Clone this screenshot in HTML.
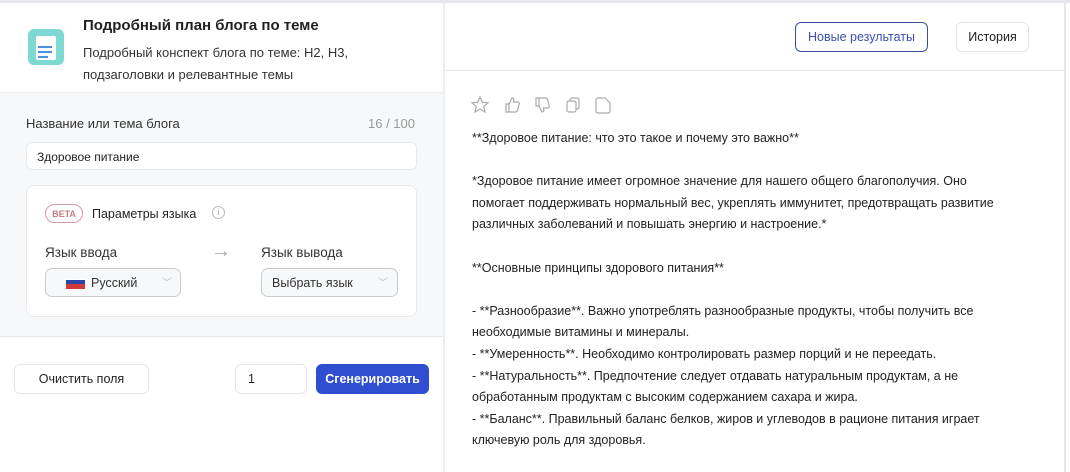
<!DOCTYPE html>
<html><head><meta charset="utf-8"><style>
*{box-sizing:border-box;margin:0;padding:0}
body{width:1070px;height:472px;overflow:hidden;background:#fff;font-family:"Liberation Sans","DejaVu Sans",sans-serif;color:#222;position:relative}
.a{position:absolute}
.btn{position:absolute;border:1px solid #e3e5ea;border-radius:6px;background:#fff;font-size:13px;display:flex;align-items:center;justify-content:center}
.txt{position:absolute;left:472px;top:128px;width:545px;font-size:12.5px;line-height:21.6px;color:#222}
</style></head><body>
<div class="a" style="left:0;top:0;width:1070px;height:3px;background:#e6e7ea"></div>
<!-- left -->
<div class="a" style="left:0;top:92px;width:443px;height:245px;background:#f7f8fa;border-top:1px solid #eceef1;border-bottom:1px solid #e6e8ec"></div>
<div class="a" style="left:443px;top:3px;width:2px;height:469px;background:#eceef1"></div>
<div class="a" style="left:28px;top:29px;width:36px;height:36px;border-radius:6px;background:#7dd9d2"></div>
<div class="a" style="left:36px;top:36px;width:20px;height:24px;background:#fff;border-radius:2px"></div>
<div class="a" style="left:38px;top:46px;width:14px;height:2px;background:#4a90e2"></div>
<div class="a" style="left:38px;top:51px;width:14px;height:2px;background:#4a90e2"></div>
<div class="a" style="left:38px;top:56px;width:10px;height:2px;background:#4a90e2"></div>
<div class="a" style="left:83px;top:17px;font-size:15px;font-weight:bold;color:#222">Подробный план блога по теме</div>
<div class="a" style="left:83px;top:42px;font-size:13px;line-height:22px;color:#333">Подробный конспект блога по теме: H2, H3,<br>подзаголовки и релевантные темы</div>
<div class="a" style="left:26px;top:116px;font-size:13px;color:#333">Название или тема блога</div>
<div class="a" style="left:368px;top:116px;font-size:13px;color:#999">16 / 100</div>
<div class="a" style="left:26px;top:142px;width:391px;height:28px;background:#fff;border:1px solid #e8eaee;border-radius:6px;font-size:12px;padding:7px 10px;color:#222">Здоровое питание</div>
<div class="a" style="left:26px;top:185px;width:391px;height:132px;background:#fff;border:1px solid #e8eaee;border-radius:8px"></div>
<div class="a" style="left:45px;top:204px;width:38px;height:19px;border:1px solid #d89aa0;border-radius:10px;font-size:9px;font-weight:bold;color:#c97c84;display:flex;align-items:center;justify-content:center">BETA</div>
<div class="a" style="left:92px;top:207px;font-size:12.5px;color:#222">Параметры языка</div>
<div class="a" style="left:212px;top:206px;width:13px;height:13px;border:1px solid #bbb;border-radius:50%;font-size:9px;color:#aaa;text-align:center;line-height:11px">i</div>
<div class="a" style="left:45px;top:245px;font-size:13.5px;color:#333">Язык ввода</div>
<div class="a" style="left:211px;top:240px;font-size:20px;color:#aaa">→</div>
<div class="a" style="left:261px;top:245px;font-size:13.5px;color:#333">Язык вывода</div>
<div class="a" style="left:45px;top:268px;width:136px;height:29px;border:1px solid #c9cbd1;border-radius:7px;background:#f7f8fa"></div>
<div class="a" style="left:66px;top:279px;width:19px;height:3px;background:#fff"></div>
<div class="a" style="left:66px;top:280px;width:19px;height:4px;background:#2946a8"></div>
<div class="a" style="left:66px;top:284px;width:19px;height:5px;background:#d33a3a"></div>
<div class="a" style="left:91px;top:276px;font-size:12.5px;color:#333">Русский</div>
<div class="a" style="left:162px;top:274px;font-size:10px;color:#bbb">﹀</div>
<div class="a" style="left:261px;top:268px;width:137px;height:29px;border:1px solid #c9cbd1;border-radius:7px;background:#f7f8fa"></div>
<div class="a" style="left:272px;top:276px;font-size:12.5px;color:#333">Выбрать язык</div>
<div class="a" style="left:378px;top:274px;font-size:10px;color:#bbb">﹀</div>
<div class="btn" style="left:14px;top:364px;width:135px;height:30px;font-size:12.5px;color:#222">Очистить поля</div>
<div class="btn" style="left:235px;top:364px;width:72px;height:30px;justify-content:flex-start;padding-left:12px;font-size:12.5px">1</div>
<div class="btn" style="left:316px;top:364px;width:113px;height:30px;background:#2f4fd0;border-color:#2f4fd0;color:#fff;font-weight:bold;font-size:12.5px">Сгенерировать</div>
<!-- right -->
<div class="a" style="left:445px;top:70px;width:620px;height:1px;background:#e6e7ea"></div>
<div class="a" style="left:1064px;top:3px;width:2px;height:469px;background:#e6e7ea"></div>
<div class="btn" style="left:795px;top:22px;width:133px;height:30px;border-color:#3a4f9a;color:#3a4fb0;font-size:12.5px">Новые результаты</div>
<div class="btn" style="left:956px;top:22px;width:73px;height:30px;font-size:12.5px;color:#222">История</div>
<svg class="a" style="left:470px;top:95px" width="150" height="20" fill="none" stroke="#aaa" stroke-width="1.2">
<path d="M10 2 L12.4 7.3 L18 7.8 L13.8 11.5 L15 17 L10 14.1 L5 17 L6.2 11.5 L2 7.8 L7.6 7.3 Z"/>
<path d="M36 9 h3 v8 h-3 z M39 9 l3-6 c2 0 2 2 1.5 4 h4.5 c1 0 1.5 1 1.2 2 l-1.5 6 c-.3 1-1 2-2 2 h-6.7"/>
<path d="M66 11 h3 v-8 h-3 z M69 11 l3 6 c2 0 2-2 1.5-4 h4.5 c1 0 1.5-1 1.2-2 l-1.5-6 c-.3-1-1-2-2-2 h-6.7"/>
<rect x="97" y="6" width="9" height="11" rx="2"/><path d="M100 6 v-1 a2 2 0 0 1 2-2 h5 a2 2 0 0 1 2 2 v7 a2 2 0 0 1-2 2 h-1"/>
<path d="M128 3 h7 l5 5 v8 a2 2 0 0 1-2 2 h-10 a2 2 0 0 1-2-2 v-11 a2 2 0 0 1 2-2 z"/>
</svg>
<div class="txt">**Здоровое питание: что это такое и почему это важно**<br><br>*Здоровое питание имеет огромное значение для нашего общего благополучия. Оно помогает поддерживать нормальный вес, укреплять иммунитет, предотвращать развитие различных заболеваний и повышать энергию и настроение.*<br><br>**Основные принципы здорового питания**<br><br>- **Разнообразие**. Важно употреблять разнообразные продукты, чтобы получить все необходимые витамины и минералы.<br>- **Умеренность**. Необходимо контролировать размер порций и не переедать.<br>- **Натуральность**. Предпочтение следует отдавать натуральным продуктам, а не обработанным продуктам с высоким содержанием сахара и жира.<br>- **Баланс**. Правильный баланс белков, жиров и углеводов в рационе питания играет ключевую роль для здоровья.</div>
</body></html>
